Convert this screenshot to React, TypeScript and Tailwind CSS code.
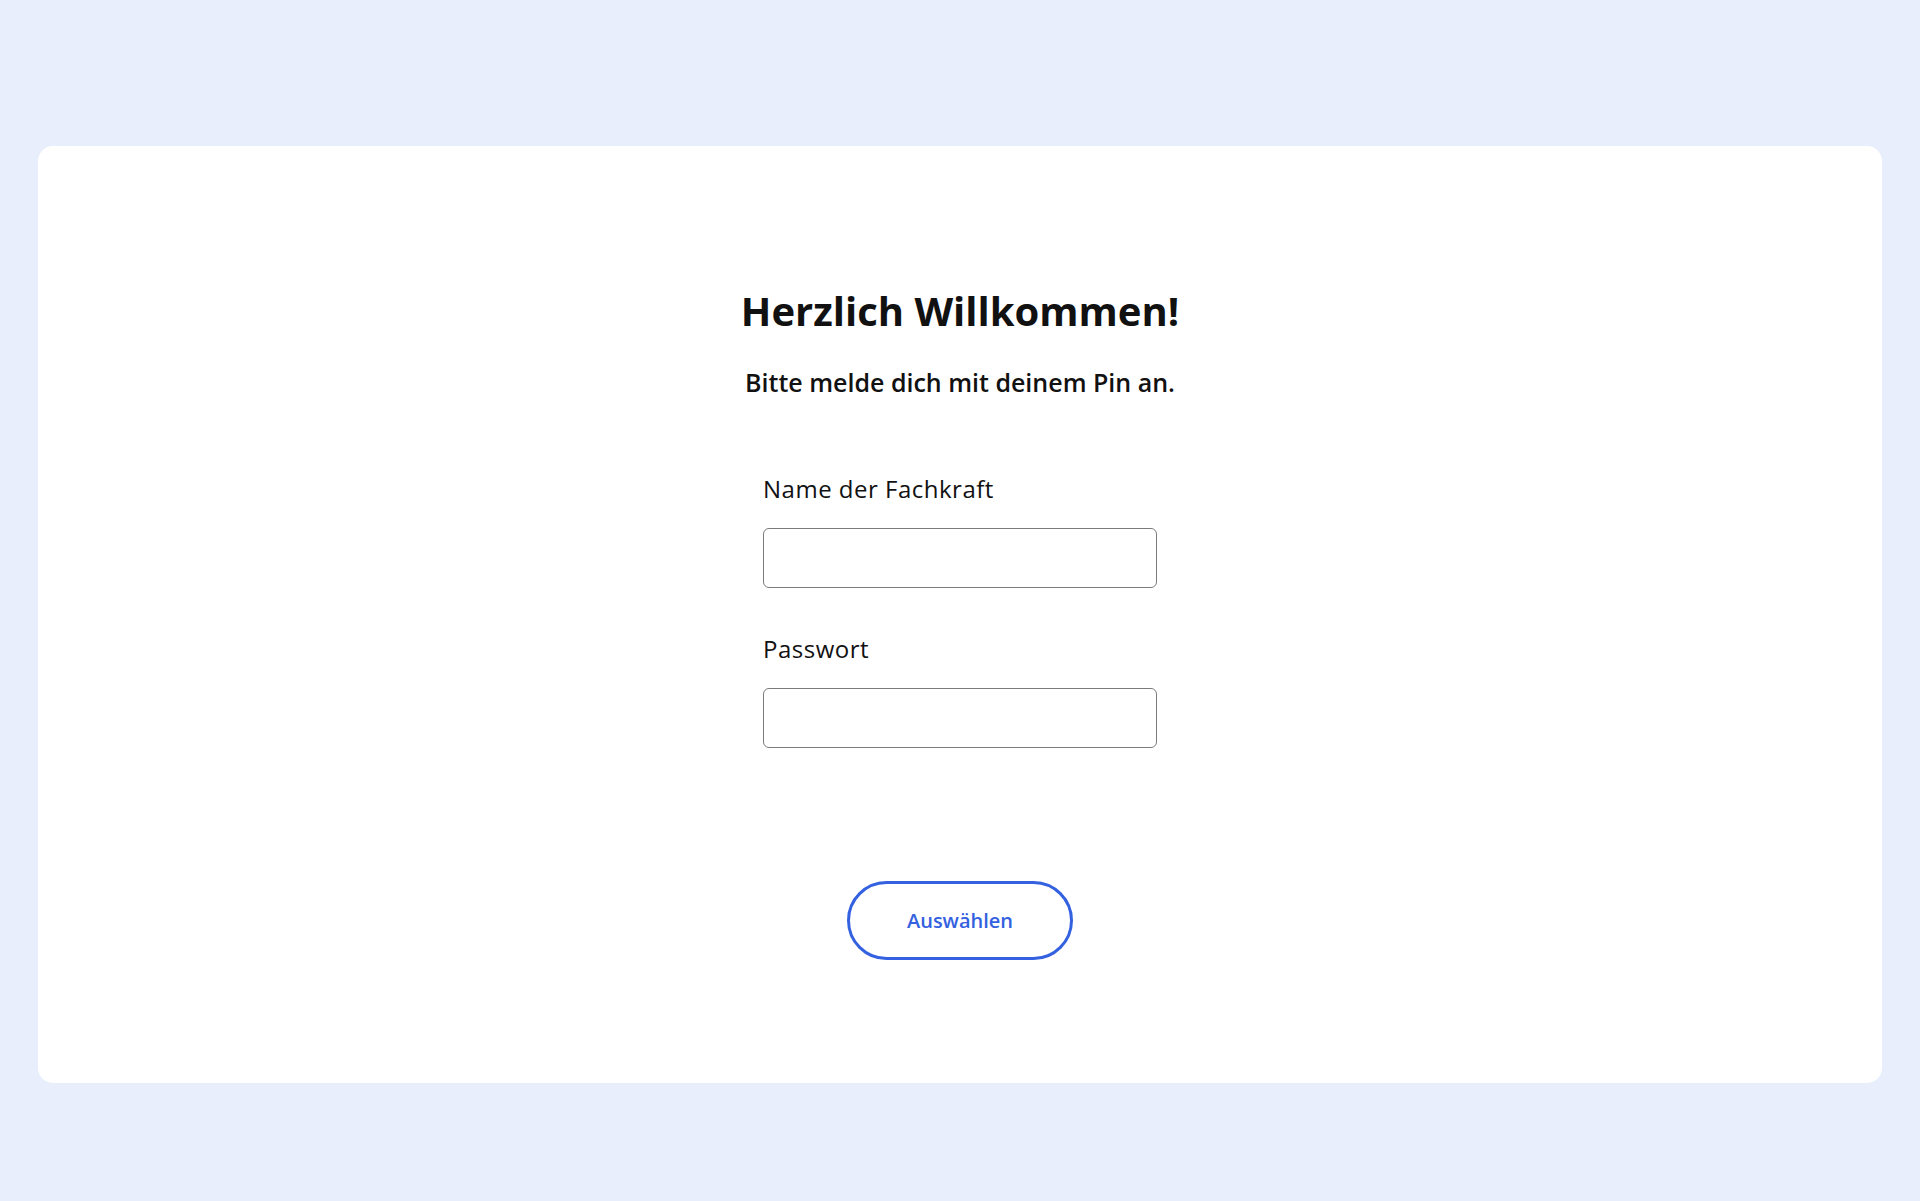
export default function App() {
  return (
    <div className="min-h-[1201px] bg-[#e8eefb] px-[38px] pt-[146px] pb-[118px] font-['Open_Sans',sans-serif]">
      <main className="flex h-[937px] flex-col items-center rounded-[15px] bg-white pt-[141px]">
        <h1 className="text-[40px] font-bold leading-[48px] text-[#111111]">Herzlich Willkommen!</h1>
        <p className="mt-[31px] text-[25px] font-semibold leading-[33px] text-[#111111]">
          Bitte melde dich mit deinem Pin an.
        </p>

        <form className="mt-[74px] flex w-[394px] flex-col" onSubmit={(e) => e.preventDefault()}>
          <label className="text-[24px] leading-[32px] tracking-[0.5px] text-[#111111]" htmlFor="name">
            Name der Fachkraft
          </label>
          <input
            id="name"
            type="text"
            className="mt-[23px] h-[60px] w-full rounded-[6px] border border-[#7b7b7b] bg-white px-3 text-[20px] outline-none"
          />

          <label className="mt-[45px] text-[24px] leading-[32px] tracking-[0.5px] text-[#111111]" htmlFor="pin">
            Passwort
          </label>
          <input
            id="pin"
            type="password"
            className="mt-[23px] h-[60px] w-full rounded-[6px] border border-[#7b7b7b] bg-white px-3 text-[20px] outline-none"
          />
        </form>

        <button
          type="button"
          className="mt-[133px] h-[79px] w-[226px] rounded-full border-[3px] border-[#3461df] bg-white text-[20px] font-semibold text-[#3461df]"
        >
          Auswählen
        </button>
      </main>
    </div>
  )
}
